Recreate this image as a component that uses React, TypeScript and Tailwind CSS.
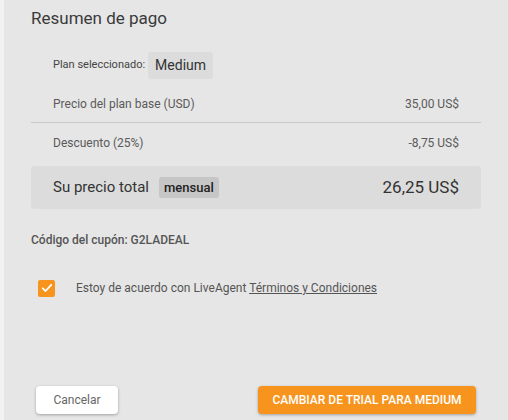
const font = { fontFamily: 'Roboto, "Liberation Sans", sans-serif' };

const Row = ({ label, value }: { label: string; value: string }) => (
  <div className="flex h-[20px] items-center justify-between pl-[22px] pr-[22px] text-[12px] text-[#5a5a5a]">
    <span>{label}</span>
    <span>{value}</span>
  </div>
);

export default function App() {
  return (
    <div className="flex h-[420px] w-[508px] overflow-hidden" style={font}>
      <div className="w-[4px] bg-[#f2f2f2]" />
      <div className="flex flex-1 flex-col bg-[#e6e6e6] pl-[27px] pr-[27px]">
        <h1 className="mt-[8px] h-[20px] text-[17px] leading-[20px] text-[#3a3a3a]">Resumen de pago</h1>

        {/* Plan */}
        <div className="mt-[24px] flex items-center gap-[3px] pl-[22px]">
          <span className="text-[11px] text-[#444]">Plan seleccionado:</span>
          <span className="flex h-[27px] items-center rounded-[3px] bg-[#dcdcdc] px-[7px] text-[14px] text-[#333]">
            Medium
          </span>
        </div>

        <div className="mt-[15px]">
          <Row label="Precio del plan base (USD)" value="35,00 US$" />
        </div>
        <div className="mt-[8px] h-px bg-[#c9c9c9]" />
        <div className="mt-[10px]">
          <Row label="Descuento (25%)" value="-8,75 US$" />
        </div>

        {/* Total */}
        <div className="mt-[13px] flex h-[43px] items-center justify-between rounded-[4px] bg-[#dcdcdc] pl-[22px] pr-[22px]">
          <div className="flex items-center gap-[10px]">
            <span className="text-[15px] text-[#333]">Su precio total</span>
            <span className="flex h-[21px] items-center rounded-[3px] bg-[#c6c6c6] px-[5px] text-[13px] font-medium text-[#222]">
              mensual
            </span>
          </div>
          <span className="text-[17px] text-[#333]">26,25 US$</span>
        </div>

        <div className="mt-[21px] flex h-[20px] items-center text-[12px] font-medium text-[#555]">
          Código del cupón: G2LADEAL
        </div>

        {/* Terms */}
        <div className="mt-[29px] ml-[7px] flex items-center gap-[21px]">
          <span className="flex h-[17px] w-[17px] items-center justify-center rounded-[2px] bg-[#f7941d]">
            <svg width="12" height="12" viewBox="0 0 12 12" fill="none">
              <path d="M1.8 6.3 L4.6 9 L10.2 2.8" stroke="#fff" strokeWidth="1.8" strokeLinecap="round" strokeLinejoin="round" />
            </svg>
          </span>
          <span className="text-[12px] text-[#555]">
            Estoy de acuerdo con LiveAgent{' '}
            <a className="underline">Términos y Condiciones</a>
          </span>
        </div>

        {/* Buttons */}
        <div className="mt-[89px] flex items-center justify-between px-[5px]">
          <button className="h-[28px] w-[82px] rounded-[4px] bg-white text-[12px] text-[#666] shadow-[0_1px_3px_rgba(0,0,0,0.3)]">
            Cancelar
          </button>
          <button className="h-[28px] w-[218px] rounded-[4px] bg-[#f7941d] text-[12px] font-medium uppercase text-white shadow-[0_1px_3px_rgba(0,0,0,0.3)]">
            Cambiar de trial para Medium
          </button>
        </div>
      </div>
    </div>
  );
}
